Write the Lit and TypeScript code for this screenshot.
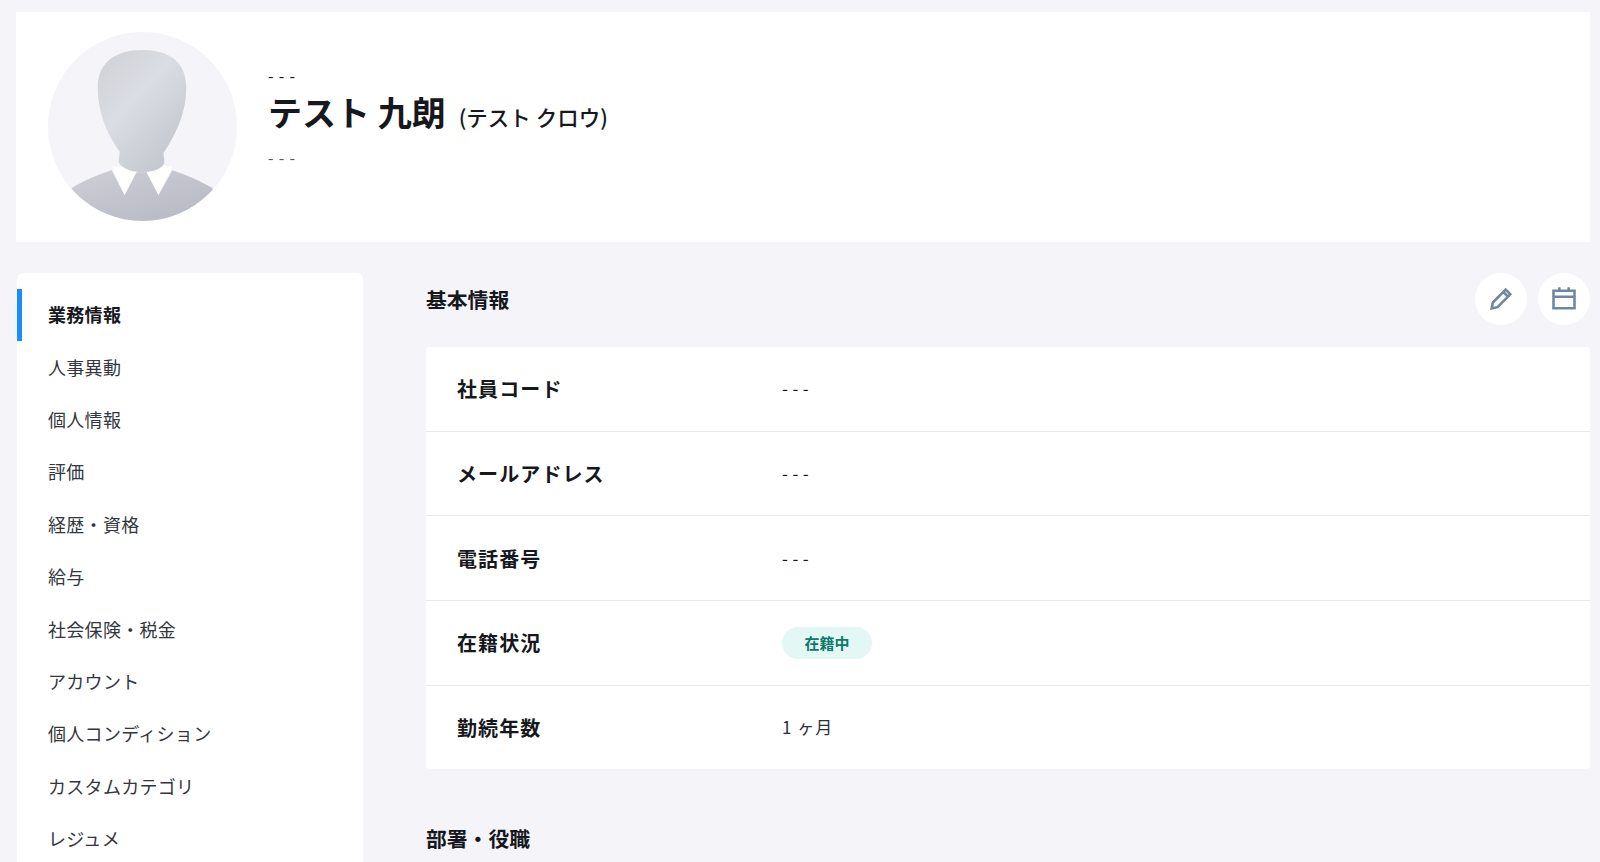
import { LitElement, html, css } from "lit";
import { customElement } from "lit/decorators.js";

const NAV = ["業務情報","人事異動","個人情報","評価","経歴・資格","給与","社会保険・税金","アカウント","個人コンディション","カスタムカテゴリ","レジュメ"];

@customElement("app-root")
export class AppRoot extends LitElement {
  static styles = css`
    :host { display:block; height:862px; overflow:hidden; background:#f4f4f9; color:#16181d;
      font-family:"Noto Sans CJK JP","Noto Sans",sans-serif; }
    .page { padding:12px 10px 0 16px; display:flex; flex-direction:column; gap:31px; }
    .head { height:230px; background:#fff; display:flex; align-items:center; gap:31px; padding:0 32px; box-sizing:border-box; }
    .avatar { width:189px; height:189px; flex:none; display:block; margin-bottom:1px; }
    .info { display:flex; flex-direction:column; padding-bottom:23px; }
    .top { font-size:16px; line-height:20px; letter-spacing:5.2px; margin-bottom:4px; }
    .name { font-size:34px; line-height:46px; font-weight:700; display:flex; align-items:baseline; gap:13px; }
    .kana { font-size:21.5px; font-weight:500; }
    .sub { font-size:16px; line-height:20px; letter-spacing:5.2px; color:#555a63; margin-top:7px; }
    .body { display:flex; gap:63px; align-items:flex-start; }
    .side { width:346px; flex:none; margin-left:1px; background:#fff; border-radius:6px 6px 0 0; padding:16px 0 0; height:600px; box-sizing:border-box; }
    .item { height:52.4px; display:flex; align-items:center; padding:0 0 2px 31px; font-size:18px; letter-spacing:.3px; color:#33363d; box-sizing:border-box; }
    .item.on { font-weight:700; color:#16181d; padding-left:26px; border-left:5px solid #1a8cff; }
    .main { flex:1; min-width:0; }
    .sec { height:74px; display:flex; align-items:center; justify-content:space-between; padding-bottom:22px; box-sizing:border-box; }
    h2 { margin:0; font-size:20.8px; font-weight:700; line-height:28px; }
    .btns { display:flex; gap:11px; }
    .btn { width:52px; height:52px; border-radius:50%; background:#fff; display:flex; align-items:center; justify-content:center; }
    .btn svg { width:28px; height:28px; fill:none; stroke:#6f87a1; stroke-width:2.2; }
    .table { background:#fff; border-radius:4px; }
    .row { height:84.7px; display:flex; align-items:center; padding-left:31px; border-top:1px solid #e8e8f0; box-sizing:border-box; }
    .row:first-child { border-top:0; height:83.7px; }
    .lab { width:325px; flex:none; font-size:20px; font-weight:700; letter-spacing:1.1px; }
    .val { font-size:17px; letter-spacing:1px; color:#2c2f36; padding-bottom:2px; }
    .dash { letter-spacing:4.5px; color:#16181d; }
    .badge { background:#e3f8f5; color:#0d7a68; font-size:15px; font-weight:700; height:32px; width:90px; border-radius:16px; display:flex; align-items:center; justify-content:center; }
    .next { margin-top:55px; }
  `;
  render() {
    return html`<div class="page">
      <div class="head">
        <svg class="avatar" viewBox="0 0 190 190">
          <defs>
            <linearGradient id="f" x1="0.15" y1="0.1" x2="0.85" y2="1"><stop offset="0" stop-color="#d2d4da"/><stop offset=".35" stop-color="#dadde3"/><stop offset="1" stop-color="#c1c3cc"/></linearGradient>
            <linearGradient id="b" x1="0" y1="0" x2="1" y2="1"><stop offset="0" stop-color="#cfd0d7"/><stop offset="1" stop-color="#b4b6c1"/></linearGradient>
            <clipPath id="c"><circle cx="95" cy="95" r="95"/></clipPath>
          </defs>
          <circle cx="95" cy="95" r="95" fill="#f4f4f9"/>
          <g clip-path="url(#c)">
            <path d="M64 135 L77 164 L89 141 L99 141 L111 164 L125 135Z" fill="#fff"/>
            <path d="M5 175 L25 156 Q42 146 64 139 L77 164 L89 141 L99 141 L111 164 L125 139 Q146 146 164 156 L185 175 V190 H5Z" fill="url(#b)"/>
            <path d="M71 131 C75 138 85 141 95 141 C105 141 115 138 117 131 L116 122 C122 112 139 88 139 56 C139 30 122 18 95 18 C68 18 50 30 50 56 C50 88 66 112 72 120Z" fill="url(#f)"/>
          </g>
        </svg>
        <div class="info">
          <div class="top">---</div>
          <div class="name"><span>テスト 九朗</span><span class="kana">(テスト クロウ)</span></div>
          <div class="sub">---</div>
        </div>
      </div>
      <div class="body">
        <nav class="side">${NAV.map((n,i)=>html`<div class="item ${i===0?"on":""}">${n}</div>`)}</nav>
        <div class="main">
          <div class="sec"><h2>基本情報</h2><div class="btns">
            <div class="btn"><svg viewBox="0 0 24 24"><path d="M4 20l1-5L16 4l4 4L9 19z M14 6l4 4"/></svg></div>
            <div class="btn"><svg viewBox="0 0 24 24"><path d="M3 5h18v15H3z M3 10h18 M8 2v4 M16 2v4"/></svg></div>
          </div></div>
          <div class="table">
            <div class="row"><div class="lab">社員コード</div><div class="val dash">---</div></div>
            <div class="row"><div class="lab">メールアドレス</div><div class="val dash">---</div></div>
            <div class="row"><div class="lab">電話番号</div><div class="val dash">---</div></div>
            <div class="row"><div class="lab">在籍状況</div><div class="badge">在籍中</div></div>
            <div class="row"><div class="lab">勤続年数</div><div class="val">1 ヶ月</div></div>
          </div>
          <div class="next"><h2>部署・役職</h2></div>
        </div>
      </div>
    </div>`;
  }
}
